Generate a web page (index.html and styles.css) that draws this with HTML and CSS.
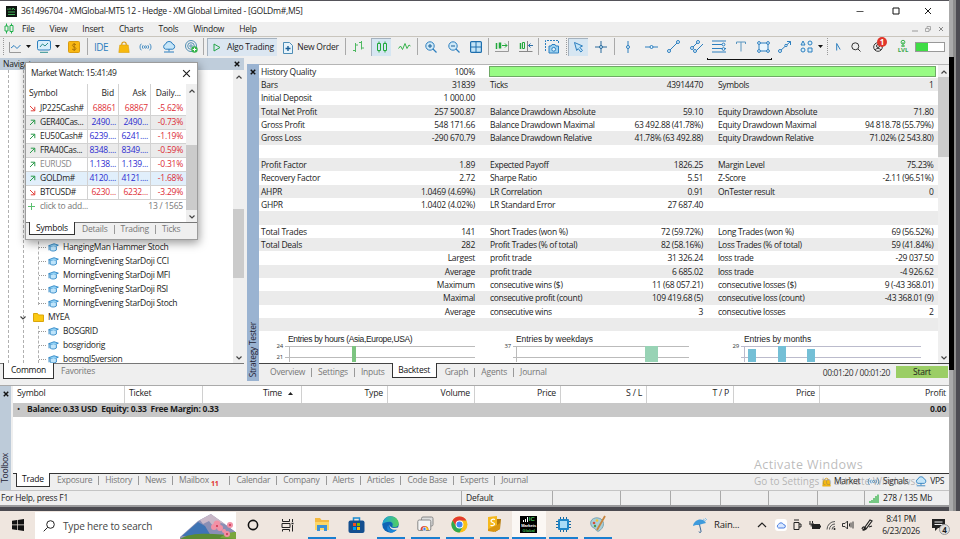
FILE: index.html
```html
<!DOCTYPE html>
<html lang="en">
<head>
<meta charset="utf-8">
<title>361496704 - XMGlobal-MT5 12</title>
<link rel="stylesheet" href="styles.css">
</head>
<body>
<svg class="defs" width="0" height="0">
  <symbol id="ea" viewBox="0 0 12 10"><path d="M.6 3 6.6.8 11.4 2.4 6 5z" fill="#8fd0f5" stroke="#1d7cc0" stroke-width=".9"/><path d="M2.2 4.2v3.6c2 1.6 5 1.5 7 0V4M1 3.2v5" fill="#bfe4fa" stroke="#1d7cc0" stroke-width=".9"/></symbol>
  <symbol id="up" viewBox="0 0 7 7"><path d="M1 6 5.8 1.2M1.8 1.2h4v4" fill="none" stroke="#2c9c4c"/></symbol>
  <symbol id="down" viewBox="0 0 7 7"><path d="M1 1l4.8 4.8M5.8 1.8v4h-4" fill="none" stroke="#e2443e"/></symbol>
  <symbol id="x" viewBox="0 0 8 8"><path d="M1 1l6 6M7 1 1 7" fill="none" stroke="currentColor"/></symbol>
  <symbol id="xb" viewBox="0 0 8 8"><path d="M1 1l6 6M7 1 1 7" fill="none" stroke="#111" stroke-width="1.900"/></symbol>
  <symbol id="chevU" viewBox="0 0 8 6"><path d="M1.5 4.5 4 2l2.500 2.500" fill="none" stroke="#444" stroke-width="1.200"/></symbol>
  <symbol id="chevD" viewBox="0 0 8 6"><path d="M1.500 1.500 4 4l2.500-2.500" fill="none" stroke="#444" stroke-width="1.200"/></symbol>
  <symbol id="caret" viewBox="0 0 5 3"><path d="M0 0h5L2.500 3z" fill="#111"/></symbol>
  <symbol id="cloud" viewBox="0 0 14 12"><path d="M3.500 8.200a2.600 2.600 0 0 1 0-5A3.700 3.700 0 0 1 10.600 3a2.700 2.700 0 0 1 .2 5.200z" fill="#c5e5f8" stroke="#2d7fbf"/><path d="M7 8v2.500M2 11h10" stroke="#2d7fbf"/></symbol>
  <symbol id="bag" viewBox="0 0 12 12"><path d="M3.800 5V3.200a2.200 2.200 0 0 1 4.400 0V5" fill="none" stroke="#d99a10" stroke-width="1.100"/><path d="M1.800 4h8.400l1 7.500H.8z" fill="#f7b90f" stroke="#dca00c" stroke-width=".6"/></symbol>
  <symbol id="sig" viewBox="0 0 14 10"><path d="M2.500 1.500a5 5 0 0 0 0 7M4.500 3a3 3 0 0 0 0 4M11.500 1.500a5 5 0 0 1 0 7M9.500 3a3 3 0 0 1 0 4" fill="none" stroke="#3a86bf"/><circle cx="7" cy="5" r="1.200" fill="none" stroke="#3a86bf"/></symbol>
</svg>
<div class="screen">
<div class="app">
  <header class="title">
    <svg width="11" height="11"><rect width="11" height="11" fill="#101512"/><path d="M2 4V2.500M4 4V2M6 4l1-2 2 2M2 6h7M2 8.500h7" stroke="#3fae55" fill="none"/></svg>
    <span class="title-text">361496704 - XMGlobal-MT5 12 - Hedge - XM Global Limited - [GOLDm#,M5]</span>
    <div class="winbtns">
      <svg width="8" height="8"><path d="M.5 4.500h7" stroke="#555"/></svg>
      <svg width="8" height="8"><path d="M1 1h6v6H1z" fill="none" stroke="#111"/></svg>
      <svg width="8" height="8"><use href="#x"/></svg>
    </div>
  </header>
  <nav class="menu">
    <svg width="10" height="11"><path d="M2.500.5v10M7.500.5v10" stroke="#22b14c"/><path d="M1 3h3v5H1zM6 2.500h3v6H6z" fill="#efefef" stroke="#22b14c"/></svg>
    <span>File</span><span>View</span><span>Insert</span><span>Charts</span><span>Tools</span><span>Window</span><span>Help</span>
    <div class="mdibtns">
      <svg width="6" height="6"><path d="M0 5h6" stroke="#999"/></svg>
      <svg width="6" height="6"><path d="M.5 2.500h3.500v3H.5zM2 2V.5h3.500v3.500H4" fill="none" stroke="#999" stroke-width=".8"/></svg>
      <svg width="6" height="6"><path d="M1 1l4 4M5 1 1 5" stroke="#888"/></svg>
    </div>
  </nav>
  <div class="toolbar">
    <i class="grip"></i>
    <svg width="12" height="12"><path d="M.5 1v10.500H12" stroke="#999" fill="none"/><path d="M2 7l3-2.500 3 3L11.500 4" fill="none" stroke="#2d7fbf"/></svg>
    <svg width="5" height="3"><use href="#caret"/></svg>
    <svg width="14" height="13"><rect x=".5" y=".5" width="13" height="9.500" rx="1.500" fill="#d8effb" stroke="#2d7fbf"/><path d="M3 7l2.500-3L8 6l3-3M3 12.300h8" fill="none" stroke="#2d8f8f"/></svg>
    <svg width="5" height="3"><use href="#caret"/></svg>
    <svg width="12" height="12"><rect x=".5" y=".5" width="11" height="11" rx="1" fill="#f9b812" stroke="#d99b10"/><path d="M8 3.800C7 2.800 4.300 3 4.400 4.500S8 6 8 7.700 5 9 4 8M6.200 2v8" fill="none" stroke="#a86f08" stroke-width=".9"/></svg>
    <i class="sep"></i>
    <span class="ide">IDE</span>
    <svg width="12" height="12"><use href="#bag"/></svg>
    <svg width="13" height="10"><use href="#sig"/></svg>
    <svg width="14" height="12"><use href="#cloud"/></svg>
    <svg width="13" height="13"><g fill="none" stroke="#3f83ad" stroke-width=".9"><circle cx="6" cy="6" r="5.500"/><circle cx="6" cy="6" r="3.300"/><circle cx="6" cy="6" r="1.200"/></g><circle cx="9.500" cy="9.500" r="3.200" fill="#35b34a"/><path d="M7.700 9.500h3.600M9.500 7.700v3.600" stroke="#fff"/></svg>
    <i class="sep"></i>
    <button class="algo"><svg width="8" height="9"><path d="M1 1l6 3.500L1 8z" fill="none" stroke="#22a447"/></svg>Algo Trading</button>
    <button class="order"><svg width="10" height="12"><path d="M.5.5h6l3 3v8h-9z" fill="#e6f3fb" stroke="#4f8db5"/><path d="M5 4v5M2.500 6.500h5" stroke="#1a5e96" stroke-width="1.400"/></svg>New Order</button>
    <i class="sep"></i>
    <svg width="13" height="13"><path d="M3.500 3v9M1 10.500h2.500M3.500 5H6M9.500 1v8.500M7 2.500h2.500M9.500 8H12" stroke="#4eb860" fill="none"/></svg>
    <span class="pressed"><svg width="12" height="12"><path d="M3 .5v11M9 .5v11" stroke="#22a83c"/><path d="M1.500 2.500h3v7h-3zM7.500 2.500h3v7h-3z" fill="#d6e6f2" stroke="#22a83c"/></svg></span>
    <svg width="13" height="9"><path d="M.5 6.500 2.500 4l2 3.500 2.500-6 2 5 2-3.500 1.500 1" fill="none" stroke="#35b34a"/></svg>
    <i class="sep"></i>
    <svg width="12" height="12"><circle cx="5" cy="5" r="4.200" fill="#cfe9f8" stroke="#2d7fbf"/><path d="M8 8l3.500 3.500" stroke="#2d7fbf" stroke-width="1.300"/><path d="M3 5h4M5 3v4" stroke="#1a5e96"/></svg>
    <svg width="12" height="12"><circle cx="5" cy="5" r="4.200" fill="#cfe9f8" stroke="#2d7fbf"/><path d="M8 8l3.500 3.500" stroke="#2d7fbf" stroke-width="1.300"/><path d="M3 5h4" stroke="#1a5e96"/></svg>
    <svg width="12" height="12"><rect x=".6" y=".6" width="10.800" height="10.800" rx="1" fill="#c3e4f7" stroke="#1f6fae" stroke-width="1.200"/><path d="M6 1v10M1 6h10" stroke="#1f6fae"/></svg>
    <i class="sep"></i>
    <svg width="15" height="13"><path d="M0 11.500h13.500V1" fill="none" stroke="#999"/><path d="M1.500 3v6M4.500 2.500v6M5.500 2.500v6" stroke="#22a83c" stroke-width="1.500"/><path d="M7 5.500h5M10 3.500l2 2-2 2" fill="none" stroke="#22a83c"/></svg>
    <svg width="15" height="13"><path d="M0 11.500h13.500M8.500 1v10" fill="none" stroke="#888"/><path d="M1.500 3v6" stroke="#22a83c" stroke-width="1.500"/><path d="M3.500 2.500h2v6h-2z" fill="none" stroke="#22a83c"/><path d="M9.500 5.500H14M11.500 3.500l-2 2 2 2" fill="none" stroke="#2d6fa8"/></svg>
    <i class="sep"></i>
    <svg width="14" height="14"><path d="M.5 11V.5h13V4" fill="none" stroke="#2d7fbf" stroke-dasharray="2 1"/><path d="M4 6h2l1-1.500h3L11 6h2.500v7H4z" fill="#9dd2f0" stroke="#2d7fbf"/><circle cx="8.700" cy="9.300" r="1.900" fill="#e8f5fc" stroke="#2d7fbf"/></svg>
    <i class="grip"></i>
    <span class="pressed"><svg width="11" height="12"><path d="M1.500 1.500 9.500 5 6.800 6.300 9.500 9.500 7.800 11 5.200 7.600 3.700 9.500z" fill="#c3e4f7" stroke="#2d7fbf"/></svg></span>
    <svg width="12" height="12"><path d="M0 6h12M6 0v12" stroke="#2a6a9c"/><circle cx="6" cy="6" r="1.500" fill="#cfe9f8" stroke="#2a6a9c"/></svg>
    <i class="sep"></i>
    <svg width="6" height="12"><path d="M3 0v12" stroke="#2d7fbf"/><circle cx="3" cy="6" r="1.500" fill="#eaf6fd" stroke="#2d7fbf"/></svg>
    <svg width="13" height="6"><path d="M0 3h13" stroke="#2d7fbf"/><circle cx="6.500" cy="3" r="1.500" fill="#eaf6fd" stroke="#2d7fbf"/></svg>
    <svg width="13" height="13"><g fill="#eaf6fd" stroke="#2d7fbf"><path d="M2 11 11 2"/><circle cx="2" cy="11" r="1.500"/><circle cx="11" cy="2" r="1.500"/></g></svg>
    <svg width="13" height="13"><g fill="#eaf6fd" stroke="#2d7fbf"><path d="M2 8 8 2M5 12l8-8"/><circle cx="2" cy="8" r="1.500"/><circle cx="8" cy="2" r="1.500"/><circle cx="5" cy="11" r="1.500"/></g></svg>
    <svg width="14" height="13"><g fill="#eaf6fd" stroke="#2d7fbf"><path d="M0 1h14M0 4.500h10M0 8.500h14M0 12h14"/><circle cx="11.500" cy="4.500" r="1.400"/><circle cx="11.500" cy="9" r="1.400"/></g></svg>
    <svg width="10" height="11"><path d="M.5 3V1h9v2M5 1v9.500" fill="none" stroke="#5a96c0"/></svg>
    <svg width="13" height="12"><g fill="#eaf6fd" stroke="#2d7fbf"><path d="M2 2h9v8H2z"/><circle cx="2" cy="2" r="1.400"/><circle cx="11" cy="2" r="1.400"/><circle cx="2" cy="10" r="1.400"/><circle cx="11" cy="10" r="1.400"/></g></svg>
    <svg width="14" height="13"><g fill="#eaf6fd" stroke="#2d7fbf"><path d="M2 11 12.500 1.500M9 1.500h3.500V5"/><circle cx="2" cy="11" r="1.500"/><circle cx="8" cy="5.500" r="1.200"/></g></svg>
    <svg width="13" height="13"><g fill="#d8effb" stroke="#2d7fbf"><path d="M1 5 3 1l2 4zM8 8h4v4H8z"/><circle cx="10" cy="3" r="2"/><circle cx="3" cy="10" r="2"/></g></svg>
    <svg width="5" height="3"><use href="#caret"/></svg>
    <i class="grip"></i>
    <svg width="5" height="9"><path d="M.7 8.500v-7l3.500 6" fill="none" stroke="#2d7fbf"/></svg>
    <svg width="10" height="10"><circle cx="4.300" cy="4.300" r="3.500" fill="none" stroke="#333"/><path d="M7 7l2.500 2.500" stroke="#333"/></svg>
    <span class="account"><svg width="10" height="10"><circle cx="5" cy="5" r="4.300" fill="none" stroke="#333"/><circle cx="5" cy="4" r="1.500" fill="none" stroke="#333"/><path d="M2 8c1-2 5-2 6 0" fill="none" stroke="#333"/></svg><b class="badge">1</b></span>
    <span class="lvl"><svg width="6" height="7"><circle cx="3" cy="2.200" r="1.900" fill="none" stroke="#35b34a"/><path d="M3 2v5M1 6h4" stroke="#35b34a"/></svg>LVL</span>
    <span class="battery"><i></i></span>
  </div>

  <main class="work">
    <section class="navigator">
      <h2 class="nav-head">Navigator<svg width="6" height="6"><use href="#xb"/></svg></h2>
      <div class="tree-wrap">
        <div class="tree">
          <i class="rail r1"></i><i class="rail r2"></i><i class="rail r3"></i><i class="rail r4"></i>
          <div class="leaf"><svg width="11" height="9"><use href="#ea"/></svg>HangingMan Hammer Stoch</div>
          <div class="leaf"><svg width="11" height="9"><use href="#ea"/></svg>MorningEvening StarDoji CCI</div>
          <div class="leaf"><svg width="11" height="9"><use href="#ea"/></svg>MorningEvening StarDoji MFI</div>
          <div class="leaf"><svg width="11" height="9"><use href="#ea"/></svg>MorningEvening StarDoji RSI</div>
          <div class="leaf"><svg width="11" height="9"><use href="#ea"/></svg>MorningEvening StarDoji Stoch</div>
          <div class="folder"><svg width="8" height="6"><use href="#chevD"/></svg><svg width="11" height="9"><path d="M.5.500h4l1 1.500h5v6.500H.5z" fill="#fbc913" stroke="#dba60b"/></svg>MYEA</div>
          <div class="leaf"><svg width="11" height="9"><use href="#ea"/></svg>BOSGRID</div>
          <div class="leaf"><svg width="11" height="9"><use href="#ea"/></svg>bosgridorig</div>
          <div class="leaf"><svg width="11" height="9"><use href="#ea"/></svg>bosmql5version</div>
        </div>
        <div class="scroll nav-scroll"><svg width="8" height="6"><use href="#chevU"/></svg><i></i><svg width="8" height="6"><use href="#chevD"/></svg></div>
      </div>
      <div class="tabs nav-tabs"><span class="on">Common</span><span>Favorites</span></div>
    </section>

    <section class="tester">
      <div class="strip"><svg width="6" height="6"><use href="#xb"/></svg><span>Strategy Tester</span></div>
      <div class="tester-main">
        <div class="report-wrap">
          <div class="report">
            <div class="row quality"><p><span>History Quality</span><span>100%</span></p><i class="bar"></i></div>
            <div class="row"><p><span>Bars</span><span>31839</span></p><p><span>Ticks</span><span>43914470</span></p><p><span>Symbols</span><span>1</span></p></div>
            <div class="row"><p><span>Initial Deposit</span><span>1 000.00</span></p></div>
            <div class="row"><p><span>Total Net Profit</span><span>257 500.87</span></p><p><span>Balance Drawdown Absolute</span><span>59.10</span></p><p><span>Equity Drawdown Absolute</span><span>71.80</span></p></div>
            <div class="row"><p><span>Gross Profit</span><span>548 171.66</span></p><p><span>Balance Drawdown Maximal</span><span>63 492.88 (41.78%)</span></p><p><span>Equity Drawdown Maximal</span><span>94 818.78 (55.79%)</span></p></div>
            <div class="row"><p><span>Gross Loss</span><span>-290 670.79</span></p><p><span>Balance Drawdown Relative</span><span>41.78% (63 492.88)</span></p><p><span>Equity Drawdown Relative</span><span>71.02% (2 543.80)</span></p></div>
            <div class="row"></div>
            <div class="row"><p><span>Profit Factor</span><span>1.89</span></p><p><span>Expected Payoff</span><span>1826.25</span></p><p><span>Margin Level</span><span>75.23%</span></p></div>
            <div class="row"><p><span>Recovery Factor</span><span>2.72</span></p><p><span>Sharpe Ratio</span><span>5.51</span></p><p><span>Z-Score</span><span>-2.11 (96.51%)</span></p></div>
            <div class="row"><p><span>AHPR</span><span>1.0469 (4.69%)</span></p><p><span>LR Correlation</span><span>0.91</span></p><p><span>OnTester result</span><span>0</span></p></div>
            <div class="row"><p><span>GHPR</span><span>1.0402 (4.02%)</span></p><p><span>LR Standard Error</span><span>27 687.40</span></p></div>
            <div class="row"></div>
            <div class="row"><p><span>Total Trades</span><span>141</span></p><p><span>Short Trades (won %)</span><span>72 (59.72%)</span></p><p><span>Long Trades (won %)</span><span>69 (56.52%)</span></p></div>
            <div class="row"><p><span>Total Deals</span><span>282</span></p><p><span>Profit Trades (% of total)</span><span>82 (58.16%)</span></p><p><span>Loss Trades (% of total)</span><span>59 (41.84%)</span></p></div>
            <div class="row"><p><span></span><span>Largest</span></p><p><span>profit trade</span><span>31 326.24</span></p><p><span>loss trade</span><span>-29 037.50</span></p></div>
            <div class="row"><p><span></span><span>Average</span></p><p><span>profit trade</span><span>6 685.02</span></p><p><span>loss trade</span><span>-4 926.62</span></p></div>
            <div class="row"><p><span></span><span>Maximum</span></p><p><span>consecutive wins ($)</span><span>11 (68 057.21)</span></p><p><span>consecutive losses ($)</span><span>9 (-43 368.01)</span></p></div>
            <div class="row"><p><span></span><span>Maximal</span></p><p><span>consecutive profit (count)</span><span>109 419.68 (5)</span></p><p><span>consecutive loss (count)</span><span>-43 368.01 (9)</span></p></div>
            <div class="row"><p><span></span><span>Average</span></p><p><span>consecutive wins</span><span>3</span></p><p><span>consecutive losses</span><span>2</span></p></div>
            <div class="row"></div>
            <div class="charts">
              <figure><figcaption>Entries by hours (Asia,Europe,USA)</figcaption>
                <div class="plot"><div class="ticks"><span>24</span><span>21</span></div>
                <svg width="190" height="16"><path d="M0 .5h190M0 11.500h190M4.500 0v16" stroke="#bbb" fill="none"/><path d="M67 0h4v16h-4z" fill="#7cc480"/></svg></div></figure>
              <figure><figcaption>Entries by weekdays</figcaption>
                <div class="plot"><div class="ticks"><span>37</span></div>
                <svg width="190" height="16"><path d="M0 .5h176M0 11.500h176M3.500 0v16" stroke="#bbb" fill="none"/><path d="M132 0h13v16h-13z" fill="#98d3b5"/></svg></div></figure>
              <figure><figcaption>Entries by months</figcaption>
                <div class="plot"><div class="ticks"><span>29</span></div>
                <svg width="190" height="16"><path d="M0 .5h180M0 11.500h180M3.500 0v16" stroke="#bbc" fill="none"/><path d="M7 3h8v13H7zM37 0h8v16h-8zM66 3h8v13h-8z" fill="#74bfd6"/></svg></div></figure>
            </div>
          </div>
          <div class="scroll rep-scroll"><svg width="8" height="6"><use href="#chevU"/></svg><i></i><svg width="8" height="6"><use href="#chevD"/></svg></div>
        </div>
        <div class="tabs test-tabs"><span>Overview</span><span>Settings</span><span>Inputs</span><span class="on">Backtest</span><span>Graph</span><span>Agents</span><span>Journal</span>
          <time>00:01:20 / 00:01:20</time><button class="start">Start</button></div>
      </div>
    </section>
  </main>

  <section class="toolbox">
    <div class="strip tb-strip"><svg width="6" height="6"><use href="#xb"/></svg><span>Toolbox</span></div>
    <div class="tb-main">
      <div class="cols"><span>Symbol</span><span>Ticket</span><span>Time <svg width="5" height="3"><path d="M0 3h5L2.500 0z" fill="#222"/></svg></span><span>Type</span><span>Volume</span><span>Price</span><span>S / L</span><span>T / P</span><span>Price</span><span>Profit</span></div>
      <div class="balance"><span>•</span><b>Balance: 0.33 USD&nbsp; Equity: 0.33&nbsp; Free Margin: 0.33</b><b class="total">0.00</b></div>
      <div class="empty"></div>
      <div class="tabs tb-tabs"><span class="on">Trade</span><span>Exposure</span><span>History</span><span>News</span><span>Mailbox <sub>11</sub></span><span>Calendar</span><span>Company</span><span>Alerts</span><span>Articles</span><span>Code Base</span><span>Experts</span><span>Journal</span>
        <div class="services"><svg width="9" height="10"><use href="#bag"/></svg><em>Market</em><svg width="13" height="9"><use href="#sig"/></svg><em>Signals</em><svg width="12" height="11"><use href="#cloud"/></svg><em>VPS</em></div></div>
    </div>
  </section>
  <footer class="status"><span>For Help, press F1</span><span>Default</span><span></span><span></span><span></span><span></span><span></span><span></span><span><svg width="10" height="9"><path d="M1 9V7M3 9V6M5 9V4M7 9V2M9 9V.500" stroke="#35b34a" stroke-width="1.300"/></svg>278 / 135 Mb</span></footer>
</div>
<div class="edge"></div>

<div class="watch">
  <div class="watch-title">Market Watch: 15:41:49<svg width="9" height="9" viewBox="0 0 8 8"><use href="#x"/></svg></div>
  <div class="watch-body">
    <div class="quotes">
      <div class="q head"><span>Symbol</span><span>Bid</span><span>Ask</span><span>Daily...</span></div>
      <div class="q dn"><span><svg width="7" height="7"><use href="#down"/></svg>JP225Cash#</span><span>68861</span><span>68867</span><span>-5.62%</span></div>
      <div class="q alt"><span><svg width="7" height="7"><use href="#up"/></svg>GER40Cas...</span><span>2490...</span><span>2490...</span><span>-0.73%</span></div>
      <div class="q"><span><svg width="7" height="7"><use href="#up"/></svg>EU50Cash#</span><span>6239....</span><span>6241....</span><span>-1.19%</span></div>
      <div class="q alt"><span><svg width="7" height="7"><use href="#up"/></svg>FRA40Cas...</span><span>8348....</span><span>8349....</span><span>-0.59%</span></div>
      <div class="q mute"><span><svg width="7" height="7"><use href="#up"/></svg>EURUSD</span><span>1.138...</span><span>1.139...</span><span>-0.31%</span></div>
      <div class="q sel"><span><svg width="7" height="7"><use href="#up"/></svg>GOLDm#</span><span>4120....</span><span>4121....</span><span>-1.68%</span></div>
      <div class="q dn"><span><svg width="7" height="7"><use href="#down"/></svg>BTCUSD#</span><span>6230...</span><span>6232...</span><span>-3.29%</span></div>
      <div class="add"><svg width="7" height="7"><path d="M0 3.500h7M3.500 0v7" stroke="#5cbf70"/></svg><span>click to add...</span><span>13 / 1565</span></div>
    </div>
    <div class="scroll watch-scroll"><svg width="8" height="6"><use href="#chevU"/></svg><i></i><svg width="8" height="6"><use href="#chevD"/></svg></div>
  </div>
  <div class="tabs watch-tabs"><span class="on">Symbols</span><span>Details</span><span>Trading</span><span>Ticks</span></div>
</div>

<div class="activate"><strong>Activate Windows</strong><span>Go to Settings to activate Windows.</span></div>
<i class="underline"></i>

<div class="taskbar">
  <span><svg width="12" height="12"><path d="M0 1.700 5 1v4.600H0zM5.700.9 12 0v5.600H5.700zM0 6.300h5V11l-5-.7zM5.700 6.300H12V12l-6.300-.9z" fill="#111"/></svg></span>
  <div class="search"><svg width="12" height="12"><circle cx="7.500" cy="4.500" r="3.800" fill="none" stroke="#222"/><path d="M4.700 7.300.7 11.300" stroke="#222"/></svg><span>Type here to search</span>
    <svg class="hill" width="56" height="25"><path d="M0 23 18 7 31 0 56 18v7H0z" fill="#8a8fb5"/><path d="M44 9 31 0h25v18z" fill="#fff"/><path d="M2 22 18 8l7 4 6 10z" fill="#3e74b4"/><path d="M20 6 31 0l14 10-8-2-4 4-4-5-6 3z" fill="#c9b8c8"/><path d="M0 25c12-8 38-5 56-3v3z" fill="#5b8c32"/><path d="M40 24c4-4 9-6 16-6v7z" fill="#79a63c"/><g fill="#f291a5"><circle cx="37" cy="10" r="3.500"/><circle cx="40" cy="14" r="3"/><circle cx="34" cy="13" r="3"/><circle cx="50" cy="11" r="3"/><circle cx="47" cy="20" r="3"/><circle cx="44" cy="17" r="2"/></g><g fill="#c8324f"><circle cx="37" cy="12" r="1"/><circle cx="50" cy="11" r="1"/><circle cx="47" cy="20" r="1"/></g></svg></div>
  <span><svg width="12" height="12"><circle cx="6" cy="6" r="4.600" fill="none" stroke="#111" stroke-width="1.600"/></svg></span>
  <span><svg width="13" height="12"><path d="M1.500 0v2.500h7V0M1 4.500h8v4H1zM1.500 12.500v-2h7v2M11.500 0v3M11.500 6v6.500" fill="none" stroke="#222"/><path d="M10.500 4.500h2" stroke="#222" stroke-width="1.500"/></svg></span>
  <span class="app-ico run"><svg width="16" height="14"><path d="M1 1h5l1.500 2H15v10H1z" fill="#f4b93f"/><path d="M1 5h14v8H1z" fill="#fcd667"/><path d="M3 8h10v6h-3v-3H6v3H3z" fill="#3c92d6"/></svg></span>
  <span class="app-ico"><svg width="17" height="16"><path d="M5.500 4V1h6v3" fill="none" stroke="#1b8bd0" stroke-width="1.500"/><rect x=".5" y="3.500" width="16" height="12.500" rx="2" fill="#144f8f"/><path d="M5 6h3v3H5z" fill="#f25022"/><path d="M9 6h3v3H9z" fill="#7fba00"/><path d="M5 10h3v3H5z" fill="#00a4ef"/><path d="M9 10h3v3H9z" fill="#ffb900"/></svg></span>
  <span class="app-ico run"><svg width="17" height="17"><defs><linearGradient id="ed" x1="0" y1="0" x2="1" y2="0"><stop offset="0" stop-color="#1ea5d8"/><stop offset="1" stop-color="#54cf5c"/></linearGradient></defs><circle cx="8.500" cy="8.500" r="8.200" fill="#0f64b5"/><path d="M.4 8C1.500 2 5.500.3 8.500.3c5 0 8.300 3.700 8.200 7.200 0 2.500-2 3.800-4.200 3.800-2 0-2.500-.8-2-1.800.9-2-.9-3.700-3-3.700C4 5.800 1.500 7 .4 8z" fill="url(#ed)"/><path d="M6.500 9c-.5 3.500 3 6 8 4.800-1 1.200-3 2.700-4.500 2.900-5-.7-6-5-3.500-7.700z" fill="#1b86d8"/><path d="M8 8.500c-.7 3.200 3.500 4.500 9 2.700l-1.500 2.500C10 14.500 6.500 12 8 8.500z" fill="#efe6e0"/></svg></span>
  <span class="app-ico run"><svg width="17" height="16"><rect x="4.500" y="1" width="11.500" height="9" rx="1.500" fill="#ddd" stroke="#888"/><rect x=".800" y="4" width="13" height="10.500" rx="1.500" fill="#f4f4f4" stroke="#888"/><path d="M3.500 14a4 4 0 0 1 8 0" fill="#db4437"/><path d="M8 10.500a4 4 0 0 1 3.500 3.500H8z" fill="#f4c20d"/><circle cx="7.500" cy="13" r="1.700" fill="#4285f4" stroke="#fff" stroke-width=".7"/></svg></span>
  <span class="app-ico run"><svg width="17" height="17" viewBox="-8.500 -8.500 17 17"><circle r="8" fill="#fbc116"/><path d="M-6.930-4A8 8 0 0 1 6.930-4H0L-3.460 2z" fill="#e33b2e"/><path d="M-6.930-4A8 8 0 0 0 0 8L3.460 2 0 3-3.460 2z" fill="#2da94f"/><circle r="3.900" fill="#fff"/><circle r="3" fill="#4285f4"/></svg></span>
  <span class="app-ico run"><svg width="14" height="16"><path d="M7 3h7l-1 10-5 3z" fill="#b57a08"/><path d="M1 1l9-1v12l-9 1z" fill="#f5b81c"/><path d="M10 9l3-2v6l-6 3-6-1v-2z" fill="#d99510"/><path d="M8 3.500C6.500 2.800 4 3.300 4 5s3.500 1.300 3.500 3-2.500 2-4 1.200" fill="none" stroke="#fff" stroke-width="1.200"/></svg></span>
  <span class="app-ico run active"><span class="icm"><b><svg width="5" height="5"><path d="M.5 5V3M2.500 5V2M4.500 5V0" stroke="#fff"/></svg>IC</b><i>Markets</i><u>Global</u></span></span>
  <span class="app-ico run"><svg width="15" height="15"><path d="M4.500 0v15M7.500 0v15M10.500 0v15M0 4.500h15M0 7.500h15M0 10.500h15" stroke="#1767a0"/><rect x="2" y="2" width="11" height="11" rx="1" fill="#1e86c8"/><rect x="4" y="4" width="7" height="7" fill="#a9dcf7"/></svg></span>
  <span class="app-ico run"><svg width="17" height="16"><path d="M2 9C0 3 7 0 12 3c4 3 3 9-2 12-3 1-3-2-5-3s-2-1-3-3z" fill="#a9cfd9" stroke="#7ba5b4"/><circle cx="5" cy="7" r="1.300" fill="#d7503c"/><circle cx="8" cy="4.500" r="1.300" fill="#f1c232"/><circle cx="6" cy="10" r="1.200" fill="#4a9c4a"/><path d="M16 0 8 14" stroke="#c7853e" stroke-width="1.800"/></svg></span>
  <span></span>
  <span><svg width="14" height="15"><path d="M0 8C1 1 10-1 13 5L9 6 6 7 3 7z" fill="#3f9bdc"/><path d="M6.500 6.500 8 13c.5 2-2 2-2 .5" fill="none" stroke="#39699a"/><path d="M10 1l3 2M12 0l2 2" stroke="#8bc4ea"/></svg></span>
  <span class="rain">Rain...</span>
  <span><svg width="10" height="6"><path d="M1 5l4-4 4 4" fill="none" stroke="#222" stroke-width="1.200"/></svg></span>
  <span><svg width="12" height="12"><rect width="12" height="12" rx="3" fill="#fff"/><path d="M3.500 9a2 2 0 0 1 0-3.600 2.700 2.700 0 0 1 5 .2A1.700 1.700 0 0 1 8.800 9z" fill="#d9e8ff" stroke="#4a7de0"/></svg></span>
  <span><svg width="9" height="12"><path d="M1 3.500h5v7H1zM6 5h2v3H6M1 1h5" fill="none" stroke="#222"/></svg></span>
  <span><svg width="12" height="9"><path d="M3 3h8v5H3zM11 4.500h1v2h-1z" fill="#222"/><path d="M1 0v2.500M3.500 0v2.500M0 3h5M2.200 3v2.500" stroke="#222"/></svg></span>
  <span><svg width="10" height="10"><path d="M1 9.500a8 8 0 0 1 8-8M3.500 9.500A5.500 5.500 0 0 1 9 4M6 9.500A3 3 0 0 1 9 6.500" fill="none" stroke="#555"/><circle cx="8.500" cy="9" r="1" fill="#222"/></svg></span>
  <span><svg width="12" height="10"><path d="M.5 3.500H3L5.500 1v8L3 6.500H.5zM7.500 3.500v3M9 2.500v5M11 1.500v7" fill="none" stroke="#333"/></svg></span>
  <span><svg width="12" height="12"><path d="M1 10c1-4 4-1 2 0s-1 2 2 0L11 2 9 1 4 8l1 2M8 8l3-1" fill="none" stroke="#222" stroke-width="1.200"/></svg></span>
  <span class="clock">8:41 PM<br>6/23/2026</span>
  <span class="notif"><svg width="13" height="12"><path d="M0 0h13v9H6l-3 3V9H0z" fill="#222"/><path d="M2.500 3h8M2.500 5.500h8" stroke="#eee"/></svg><b>4</b></span>
</div>
</div>
</body>
</html>
```
FILE: styles.css
```css
* { box-sizing: border-box; }
body { margin: 0; overflow: hidden; }
.screen {
  position: relative;
  display: grid;
  grid-template-columns: 949px 11px;
  grid-template-rows: 511px 28px;
  width: 960px;
  height: 539px;
  background: #4b4a50;
  font-family: "Open Sans", "Noto Sans", sans-serif;
  font-size: 8.5px;
  letter-spacing: -.22px;
  line-height: 1;
  color: #1c1c1c;
  white-space: pre;
}
.screen > * { white-space: nowrap; }
.defs { display: block; position: absolute; }
svg { display: block; flex: none; overflow: visible; }
p, figure, h2 { margin: 0; font: inherit; }
button { font: inherit; letter-spacing: inherit; color: inherit; border: 0; padding: 0; background: none; }
em { font-style: normal; }

.app { display: flex; flex-direction: column; height: 507px; background: #efefef; border-top: 1px solid #55545a; border-bottom: 2px solid #9a9a9c; }
.edge {
  width: 11px;
  height: 511px;
  background: linear-gradient(90deg, #aaa 0 4px, #8d8d8d 4px 7px, #4d4c52 7px);
  position: relative;
}
.edge::before { content: ""; display: block; width: 5px; height: 313px; margin-top: 57px; background: #000; position: absolute; }

.title { display: flex; align-items: center; height: 21px; padding-left: 6px; background: #fff; }
.title svg:first-child { margin-right: 4px; }
.title-text { font-size: 8.6px; letter-spacing: -.27px; color: #222; }
.winbtns { display: flex; gap: 24px; margin-left: auto; padding-right: 17px; }
.menu { display: flex; align-items: center; height: 14px; padding-left: 4px; }
.menu span { margin-left: 15px; }
.menu svg + span { margin-left: 8px; }
.mdibtns { display: flex; gap: 7px; margin-left: auto; padding-right: 5px; }
.toolbar {
  display: grid;
  grid-template-columns:
    6px 17px 10px 21px 6px 27px 1px 26px 20px 23px 23px 23px 1px 73px 68px 1px 25px 20px 26px 1px
    25px 21px 24px 1px 26px 23px 1px 26px 3px 20px 26px 1px 26px 21px 23px 22px 23px 22px 22px 22px 20px 9px
    5px 17px 18px 26px 24px 32px;
  align-items: center;
  justify-items: center;
  height: 21px;
  border-top: 1px solid #c9c5bd;
}
.grip { height: 17px; border-left: 1px dotted #999; }
.sep { width: 1px; height: 17px; background: #a9a9a9; }
.ide { font-size: 10px; letter-spacing: -.5px; color: #2d7fbf; }
.algo { display: flex; align-items: center; gap: 6px; justify-self: end; width: 70px; height: 18px; padding: 1px 0 0 5px; background: #dbe6f1; border-top: 1px solid #a5b2bf; border-left: 1px solid #a5b2bf; }
.order { display: flex; align-items: center; gap: 4px; padding-top: 2px; }
.pressed { display: grid; place-items: center; width: 20px; height: 18px; background: #d6e6f2; border-top: 1px solid #a5b2bf; border-left: 1px solid #a5b2bf; }
.account { position: relative; }
.badge { position: absolute; left: 4px; top: -5px; width: 10px; height: 10px; border-radius: 5px; background: #e0362b; color: #fff; font-size: 8px; line-height: 10px; text-align: center; }
.lvl { display: flex; flex-direction: column; align-items: center; font-size: 6px; font-weight: 700; color: #35a84a; letter-spacing: -.1px; }
.battery { justify-self: start; width: 30px; height: 10px; border: 1px solid #999; background: #fff; }
.battery i { display: block; width: 12px; height: 8px; background: #3fdc45; }

.work { display: flex; height: 328px; }
.navigator { display: flex; flex-direction: column; width: 244px; height: 324px; padding-top: 1px; }
.nav-head { display: flex; align-items: center; justify-content: space-between; height: 12px; padding: 1px 4px 0 3px; background: #bfcddb; color: #222; }
.tree-wrap { display: flex; flex: 1; min-height: 0; background: #fff; border-bottom: 1px solid #777; }
.tree { position: relative; flex: 1; padding-top: 171px; overflow: hidden; }
.leaf, .folder { display: flex; align-items: center; height: 14px; letter-spacing: -.28px; }
.leaf { padding-left: 48px; gap: 4px; position: relative; }
.leaf::before { content: ""; position: absolute; left: 39px; width: 7px; border-top: 1px dotted #999; }
.folder { padding-left: 19px; gap: 4px; }
.folder svg:first-child { margin-right: 2px; }
.rail { position: absolute; top: 0; bottom: 0; border-left: 1px dashed #b0b0b0; }
.r1 { left: 8px; }
.r2 { left: 23px; }
.r3 { left: 38px; bottom: 58px; }
.r4 { left: 38px; top: 256px; }
.scroll { display: flex; flex-direction: column; align-items: center; justify-content: space-between; width: 11px; padding: 4px 0 2px; background: #efefef; position: relative; }
.scroll i { position: absolute; left: 0; right: 0; background: #cbcbcb; }
.nav-scroll i { top: 139px; height: 69px; }
.rep-scroll i { top: 12px; height: 80px; }
.watch-scroll i { top: 61px; height: 65px; }

.tabs { display: flex; color: #777; }
.tabs span { display: flex; align-items: center; }
.tabs .on { color: #111; background: #fff; border: 1px solid #333; border-top: 0; justify-content: center; }
.tabs span:not(.on) + span:not(.on)::before { content: ""; align-self: center; width: 1px; height: 9px; background: #999; margin: 0 6px; }
.nav-tabs { height: 17px; padding-left: 3px; }
.nav-tabs .on { width: 51px; height: 16px; margin-right: 7px; margin-top: -1px; padding-top: 1px; }
.nav-tabs span { height: 15px; }

.tester { display: flex; flex: 1; padding: 7px 0 4px 3px; }
.strip { display: flex; flex-direction: column; justify-content: space-between; align-items: center; width: 12px; padding: 5px 0 3px; background: #9ab3d1; color: #223; }
.strip span { writing-mode: vertical-rl; transform: rotate(180deg); letter-spacing: -.28px; }
.tester-main { display: flex; flex-direction: column; flex: 1; }
.report-wrap { display: flex; height: 300px; border-top: 1px solid #b5b5b5; border-bottom: 1px solid #444; }
.report { width: 679px; background: #fff; overflow: hidden; }
.row { display: grid; grid-template-columns: 214px 213px 215.5px; gap: 15px; align-items: center; height: 13.33px; padding-left: 2px; }
.row:nth-child(even) { background: #ebebeb; }
.row p { display: flex; justify-content: space-between; padding-top: 1px; letter-spacing: -.25px; }
.row p + p { letter-spacing: -.32px; }
.bar { grid-column: 2 / 4; width: 447px; height: 11px; margin-left: -1px; border: 1px solid #6fa866; background: #98fb84; }
.charts { display: flex; height: 33px; padding: 4px 0 0 16px; }
.charts figure { flex: none; width: 228px; }
.charts figcaption { height: 11px; padding-left: 13px; font-family: "Liberation Sans", sans-serif; font-size: 8.5px; letter-spacing: -.33px; }
.charts figure + figure figcaption { letter-spacing: -.05px; }
.plot { display: flex; gap: 2px; }
.ticks { display: flex; flex-direction: column; width: 8px; gap: 4px; font-size: 6px; color: #333; text-align: right; margin-top: -3px; }
.ticks span { height: 7px; }
.test-tabs { height: 17px; padding-left: 11px; align-items: center; }
.test-tabs .on { width: 45px; height: 15px; margin: -3px 8px 0 7px; }
.test-tabs time { margin-left: auto; margin-right: 6px; color: #333; letter-spacing: -.4px; padding-top: 2px; }
.start { width: 52px; height: 12px; margin-right: 1px; background: #9bce65; color: #1c1c1c; }

.toolbox { display: flex; height: 106px; border-top: 1px solid #aaa; background: #efefef; }
.tb-strip { width: 11px; background: #bdcbd9; margin-right: 2px; padding-bottom: 7px; }
.tb-main { display: flex; flex-direction: column; flex: 1; }
.cols { display: grid; grid-template-columns: 112px 78px 99px 86px 87px 86px 86px 87px 86px 129px; height: 17px; background: #fff; }
.cols span { display: flex; align-items: center; justify-content: flex-end; gap: 6px; padding: 0 4px 1px; border-right: 1px solid #d0d0d0; font-size: 8.7px; }
.cols span:nth-child(-n+2) { justify-content: flex-start; }
.cols span:nth-child(3) { padding-right: 8px; }
.cols span:last-child { padding-right: 3px; border: 0; }
.balance { display: flex; align-items: center; height: 14px; padding: 0 3px 1px 4px; gap: 7px; background: #c8c8c8; }
.balance b { font-weight: 700; letter-spacing: -.26px; }
.total { margin-left: auto; }
.empty { height: 56px; background: #fff; }
.tb-tabs { height: 17px; border-top: 1px solid #333; padding-left: 3px; }
.tb-tabs span { height: 14px; }
.tb-tabs .on { width: 34px; margin-right: 7px; margin-top: -1px; }
.tb-tabs sub { margin: 6px 5px 0 2px; color: #e03030; font-size: 7px; font-weight: 700; }
.services { display: flex; align-items: center; gap: 3px; margin-left: auto; padding-right: 5px; color: #222; letter-spacing: -.35px; }
.services em + svg { margin-left: 4px; }
.status { display: grid; grid-template-columns: 461px 91px 68px 50px 50px 48px 49px 47px 1fr; height: 15px; border-top: 1px solid #c4c4c4; }
.status span { display: flex; align-items: center; gap: 4px; padding-left: 4px; border-left: 1px solid #aaa; }
.status span:first-child { border: 0; padding-left: 1px; }

.watch { position: absolute; left: 25px; top: 62px; width: 173px; height: 178px; background: #fff; border: 1px solid #9c9c9c; box-shadow: 1px 3px 9px rgba(0, 0, 0, .4); }
.watch-title { display: flex; justify-content: space-between; align-items: center; height: 21px; padding: 0 6px 0 5px; font-size: 8.5px; letter-spacing: -.35px; }
.watch-body { display: flex; height: 138px; }
.quotes { width: 160px; }
.q { display: grid; grid-template-columns: 62px 31px 32px 34px; height: 14px; border-bottom: 1px solid #d2d2d2; color: #2b2bd0; }
.q span { display: flex; align-items: center; justify-content: flex-end; padding-right: 2px; border-right: 1px solid #d2d2d2; }
.q span:first-child { justify-content: flex-start; gap: 4px; padding-left: 3px; color: #1c1c1c; letter-spacing: -.3px; }
.q span:last-child { border: 0; color: #dc2a35; }
.q.head { height: 18px; border: 0; margin-bottom: 0; }
.q.head span, .q.head span:last-child { color: #1c1c1c; padding-right: 4px; letter-spacing: -.1px; }
.q.dn { color: #e03038; }
.q.alt { background: #ebebeb; }
.q.sel { background: #e1effb; }
.q.mute span:first-child { color: #888; }
.add { display: flex; align-items: center; height: 13px; padding: 0 3px 0 2px; gap: 5px; color: #777; }
.add span:last-child { margin-left: auto; }
.watch-tabs { height: 17px; background: #efefef; border-top: 1px solid #777; padding-left: 3px; }
.watch-tabs .on { width: 46px; height: 13px; margin: -1px 7px 0 0; }
.watch-tabs span { height: 13px; }

.activate { position: absolute; left: 754px; top: 459px; display: flex; flex-direction: column; gap: 4px; color: rgba(120, 120, 120, .5); font-size: 10px; letter-spacing: 0; }
.activate strong { font-weight: 400; font-size: 12.5px; letter-spacing: .4px; }
.underline { position: absolute; left: 707px; top: 58px; width: 65px; height: 2px; border: 1px solid #111; border-top: 0; }

.taskbar {
  grid-column: 1 / 3;
  display: grid;
  grid-template-columns: 35px 201px 34px 34.5px repeat(9, 34.5px) 75px 20px 42px 20px 17px 17px 17px 16px 17px 22px 46px 28px;
  background: #efe6df;
}
.taskbar > span { display: grid; place-items: center; }
.search { display: flex; align-items: center; gap: 8px; padding-left: 8px; margin-top: 1px; background: #fff; font-size: 10px; color: #444; letter-spacing: -.15px; }
.hill { margin-left: auto; align-self: flex-end; }
.run { border-bottom: 2px solid #1a7fd0; background-clip: content-box; margin: 0 3px; }
.active { margin: 0; background: #fbf7f4; }
.icm { display: grid; grid-template-rows: 7px 5px 5px; justify-items: center; width: 17px; height: 17px; background: #000; color: #fff; font-family: "Liberation Sans", sans-serif; letter-spacing: 0; }
.icm b { display: flex; align-items: center; gap: 1px; font-size: 6px; line-height: 7px; color: #49c45d; }
.icm i { font-size: 4px; line-height: 5px; font-style: normal; font-weight: 700; }
.icm u { font-size: 4px; line-height: 5px; font-weight: 700; color: #3fbf55; text-decoration: none; }
.taskbar > .rain { justify-items: start; padding-left: 4px; font-size: 9.500px; }
.clock { text-align: center; line-height: 12px; letter-spacing: -.3px; }
.notif { position: relative; }
.notif b { position: absolute; left: 15px; top: 13px; width: 11px; height: 11px; border-radius: 6px; border: 1px solid #999; background: #ddd; font-size: 8px; line-height: 9px; text-align: center; }
```
